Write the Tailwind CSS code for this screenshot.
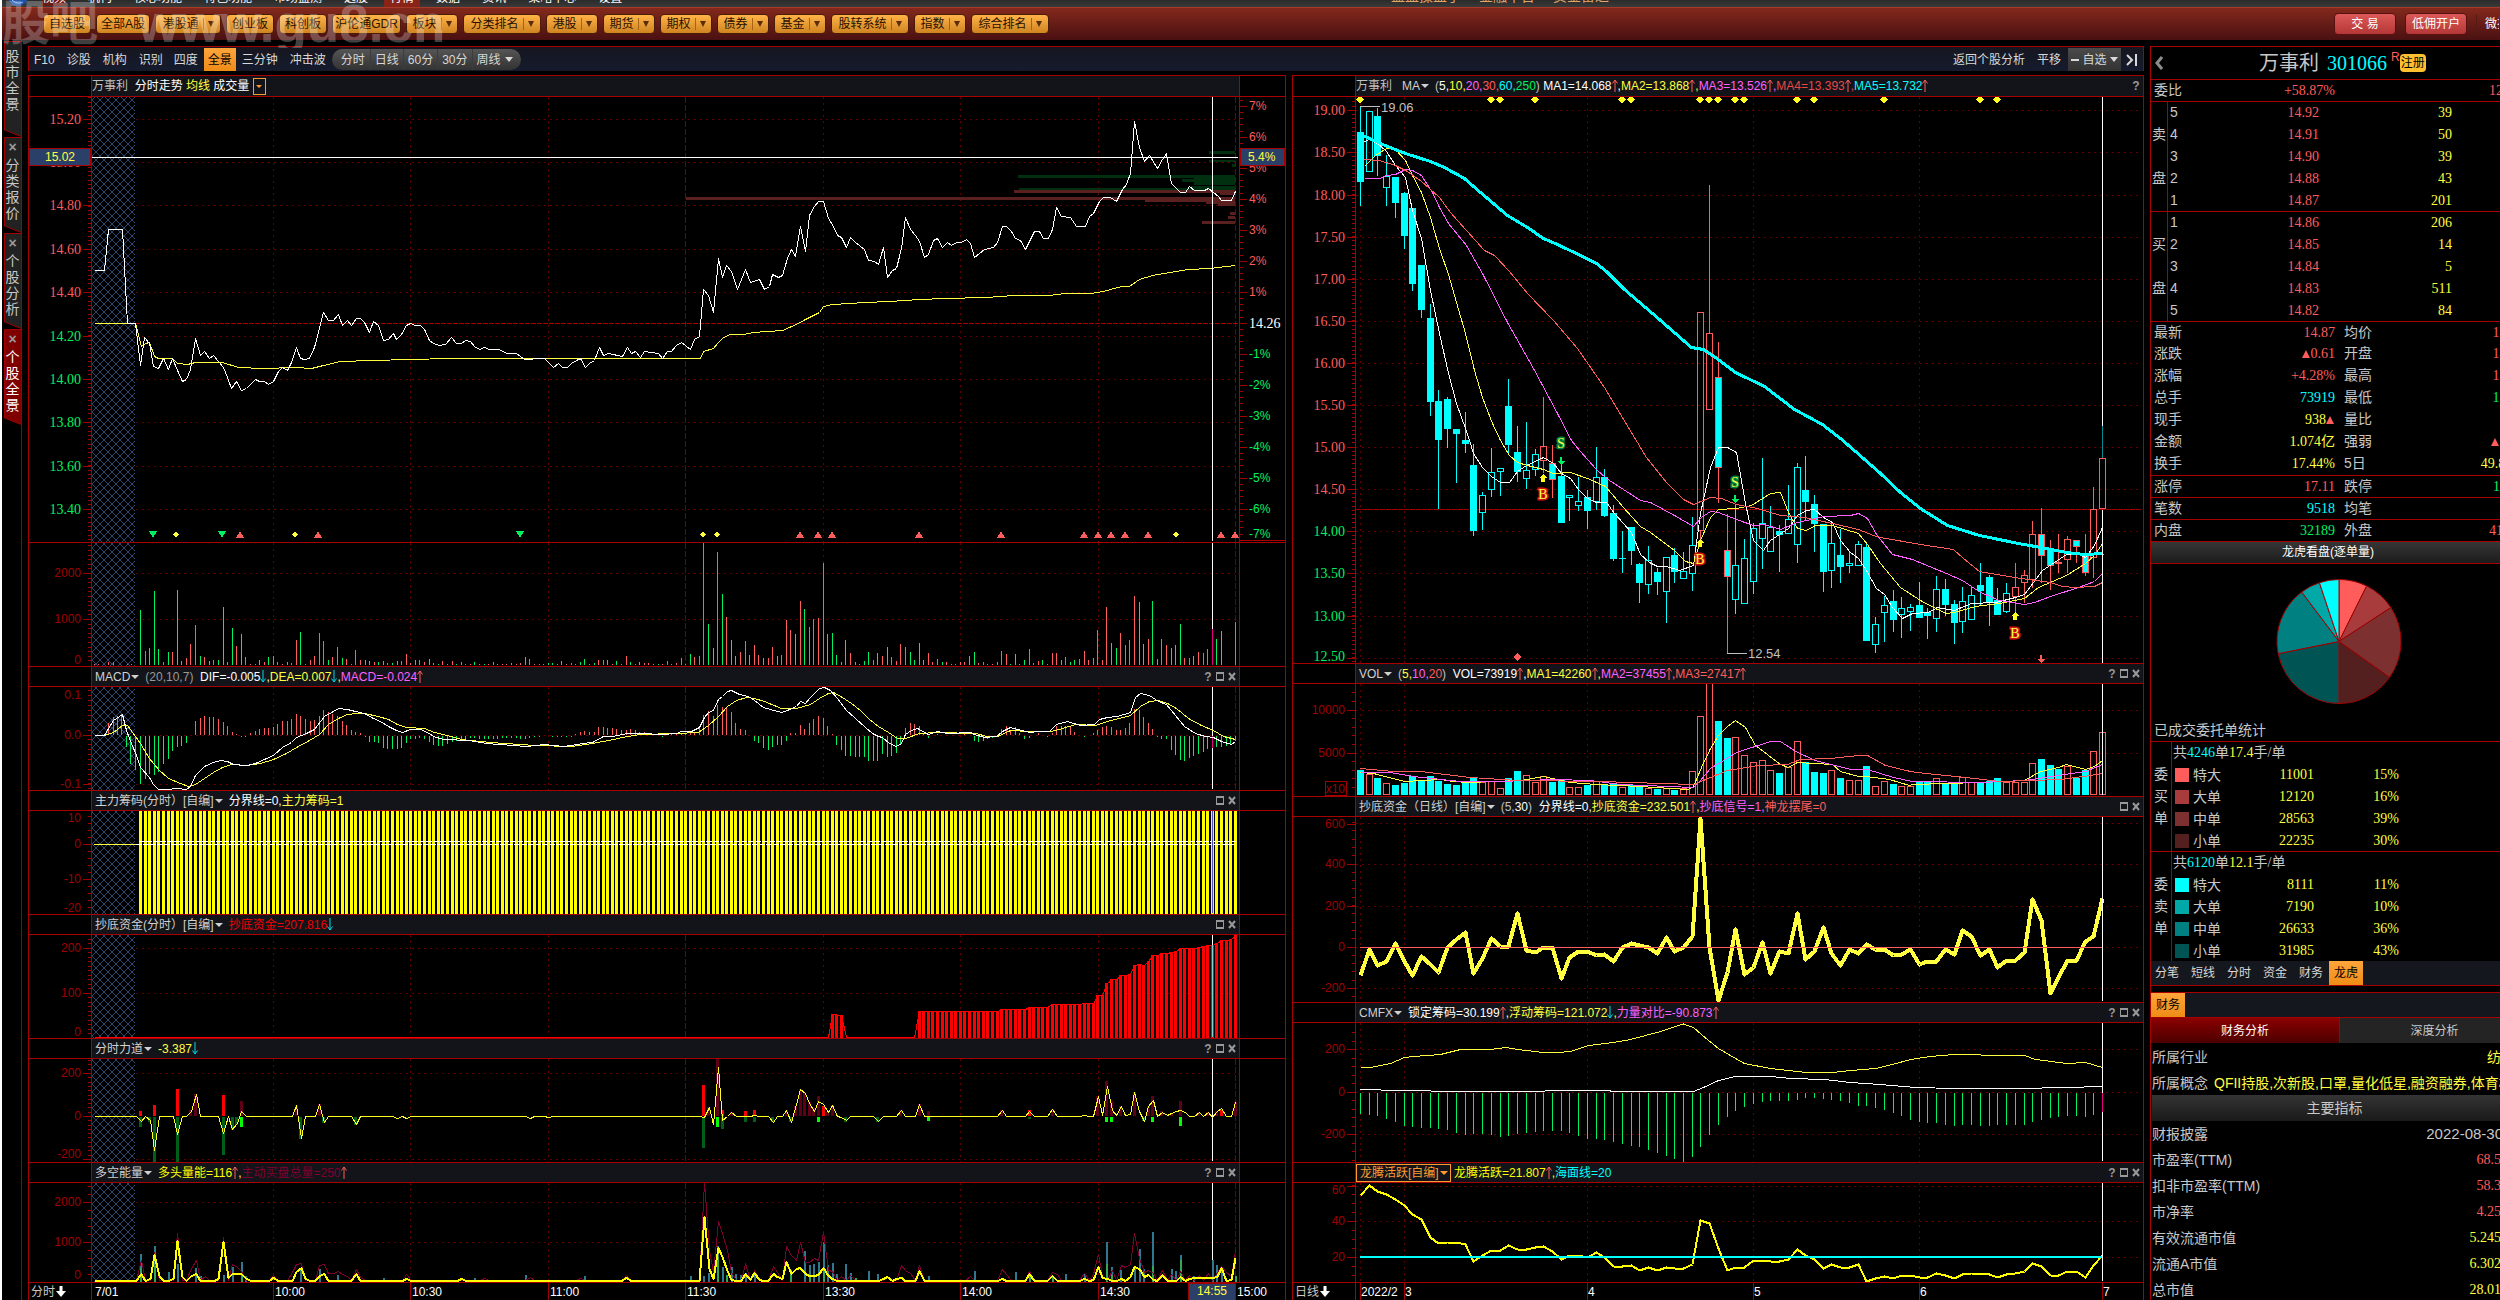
<!DOCTYPE html>
<html lang="zh-CN">
<head>
  <meta charset="UTF-8">
  <meta name="viewport" content="width=device-width, initial-scale=1.0">
  <title>万事利 301066 个股全景</title>
  <script src="https://cdn.jsdelivr.net/npm/@tailwindcss/browser@4"></script>
</head>
<body class="bg-black text-[#c8c8c8] text-xs font-['Liberation_Sans','Noto_Sans_CJK_SC',sans-serif] h-screen overflow-hidden">
<div class="relative h-screen flex flex-col overflow-hidden border-l-2 border-white">

  <!-- 菜单 -->
  <header class="h-[7px] shrink-0 overflow-hidden bg-gradient-to-b from-[#2b2b2b] to-[#3a3a3a] flex text-white">
    <nav class="w-[1389px] shrink-0 flex items-start gap-[22px] leading-4">
      <svg class="w-[18px] h-[6px] ml-[7px] -mr-[7px]" viewBox="0 0 18 6"><path d="M0 0H18C17 4 12 6 8 6C4 6 1 3 0 0Z" fill="#1d4fa8"/><path d="M3 0C6 3 10 4 14 2" stroke="#8fc0ff" fill="none"/></svg>
      <a href="#" class="-mt-[10px] bg-[#6b1a14]">视频</a>
      <a href="#" class="-mt-[10px]">机构</a>
      <a href="#" class="-mt-[10px]">核心功能</a>
      <a href="#" class="-mt-[10px]">特色功能</a>
      <a href="#" class="-mt-[10px]">市场监测</a>
      <a href="#" class="-mt-[10px]">选股</a>
      <a href="#" class="-mt-[10px] -mx-[6px] px-[6px] pb-1 bg-[#8a2318]">行情</a>
      <a href="#" class="-mt-[10px]">数据</a>
      <a href="#" class="-mt-[10px]">资讯</a>
      <a href="#" class="-mt-[10px]">策略中心</a>
      <a href="#" class="-mt-[10px]">设置</a>
    </nav>
    <div class="flex gap-[18px] -mt-[12px] text-sm leading-4 text-[#e0a868] whitespace-nowrap"><span>益盟操盘手</span><span>金融平台</span><span>资金雷达</span></div>
  </header>

  <!-- 板块按钮 -->
  <div class="h-[33px] shrink-0 flex items-center bg-gradient-to-b from-[#84291c] to-[#4a1011] border-t border-[#a83a28] pl-[41px]">
    <div id="markets" class="flex gap-[5px]"></div>
    <div class="ml-auto flex items-center gap-[9px] pr-[1px] text-white whitespace-nowrap">
      <button class="w-[62px] h-[22px] rounded-sm border border-[#5a1010] bg-gradient-to-b from-[#dc5a58] to-[#b43636]">交 易</button>
      <button class="w-[62px] h-[22px] rounded-sm border border-[#5a1010] bg-gradient-to-b from-[#dc5a58] to-[#b43636]">低佣开户</button>
      <a href="#" class="w-[23px] h-5 leading-5 pl-2 border-l border-[#5a1a14] overflow-hidden">微投</a>
    </div>
  </div>

  <main class="flex flex-1 min-h-0">
    <!-- 左侧标签 -->
    <aside class="w-[26px] shrink-0 pl-[2px]">
      <div id="side" class="w-[18px] h-full pt-[1px] border-r border-[#a00000]"></div>
    </aside>

    <section class="flex-1 min-w-0 pt-[6px]">
      <div class="flex items-center h-[25px] mb-1 pt-[1px] border-t border-x border-[#a80000] bg-gradient-to-b from-[#16161f] to-[#151b2e] text-[#d8d8d8] whitespace-nowrap">
        <button class="pl-[5px] pr-1.5">F10</button>
        <button class="px-1.5">诊股</button>
        <button class="px-1.5">机构</button>
        <button class="px-1.5">识别</button>
        <button class="pl-[5px] pr-1.5">四度</button>
        <button class="px-1 h-[23px] bg-gradient-to-b from-[#ffa53a] to-[#ee8c14] text-black">全景</button>
        <button class="px-1.5">三分钟</button>
        <button class="px-1.5">冲击波</button>
        <div class="flex items-center h-[21px] px-1 rounded-full bg-gradient-to-b from-[#555] to-[#333]">
          <button class="px-[5px] h-full border-r border-[#3c3c3c]">分时</button>
          <button class="px-1 h-full border-r border-[#3c3c3c]">日线</button>
          <button class="px-1 h-full border-r border-[#3c3c3c]">60分</button>
          <button class="px-1 h-full border-r border-[#3c3c3c]">30分</button>
          <button class="px-1 h-full flex items-center gap-1">周线<i class="border-x-4 border-t-[5px] border-x-transparent border-t-[#d8d8d8]"></i></button>
        </div>
        <div class="ml-auto flex items-center">
          <button class="pr-3">返回个股分析</button>
          <button class="pr-[7px]">平移</button>
          <button class="w-[53px] h-[23px] flex items-center justify-center gap-[3px] bg-gradient-to-b from-[#4a4a4a] to-[#333]"><i class="w-2 h-[2px] bg-[#d8d8d8]"></i>自选<i class="border-x-4 border-t-[5px] border-x-transparent border-t-[#d8d8d8]"></i></button>
          <button class="w-[22px] flex justify-center" aria-label="展开"><svg width="12" height="14" viewBox="0 0 12 14" fill="none" stroke="#d8d8d8" stroke-width="2"><path d="M1 2L6 7L1 12M10 1V13"/></svg></button>
        </div>
      </div>

      <div class="grid grid-cols-[1258fr_852fr] gap-[6px]">
        <div id="left" class="min-w-0 border-x border-[#a80000]"></div>
        <div id="right" class="min-w-0 border-x border-[#a80000]"></div>
      </div>
    </section>

    <!-- 报价 -->
    <aside class="w-[350px] shrink-0 ml-[6px] mt-[6px] overflow-hidden">
      <div class="w-[379px] border-l border-[#a80000] whitespace-nowrap">
        <h1 class="h-[33px] flex items-center border-t border-[#a80000] text-xl leading-8">
          <svg class="ml-1 mr-[96px]" width="8" height="14" viewBox="0 0 8 14" fill="none" stroke="#8c8c8c" stroke-width="3"><path d="M7 1L2 7L7 13"/></svg>
          万事利<span class="ml-2 text-[#00ffff] font-['Liberation_Serif']">301066</span><span class="ml-1 -mt-3 text-xs text-[#ff5c5c]">R</span><span class="px-[1px] text-xs leading-[18px] rounded-sm bg-[#ffc030] text-black">注册</span>
        </h1>
        <div id="quote" class="text-sm"></div>
        <h2 class="h-[22px] border-t border-[#a80000] bg-gradient-to-b from-[#363636] to-[#1c1c1c] text-white text-xs leading-5 pl-[131px]">龙虎看盘(逐单量)</h2>
        <svg id="pie" class="border-t border-[#a80000]" width="378" height="157" viewBox="2151 564 378 156"></svg>
        <div class="h-[21px] pl-[3px] text-sm leading-5">已成交委托单统计</div>
        <div id="orders" class="text-sm"></div>
        <div class="flex items-center h-[25px] border-b border-[#a80000] bg-[#15171f] text-[#d8d8d8]">
          <button class="pl-1 pr-1.5">分笔</button>
          <button class="px-1.5">短线</button>
          <button class="px-1.5">分时</button>
          <button class="px-1.5">资金</button>
          <button class="px-1.5">财务</button>
          <button class="px-[5px] h-6 bg-gradient-to-b from-[#ffa53a] to-[#ee8c14] text-black">龙虎</button>
        </div>
        <div class="mt-[6px] h-[25px] border-t border-[#a80000] bg-[#15171f]"><button class="px-[5px] h-6 bg-gradient-to-b from-[#ffa53a] to-[#ee8c14] text-black">财务</button></div>
        <div class="grid grid-cols-2 h-[26px] border-t border-[#a80000] text-center">
          <button class="bg-gradient-to-b from-[#8c0000] to-[#4c0000] border-r border-[#a80000] text-white">财务分析</button>
          <button class="bg-[#242424]">深度分析</button>
        </div>
        <div id="finance" class="pt-[1px] text-sm"></div>
      </div>
    </aside>
  </main>

  <div class="absolute left-0 top-0 h-12 flex items-end text-white/25 font-bold pointer-events-none overflow-hidden whitespace-nowrap" aria-hidden="true">
    <span class="text-5xl leading-12">股吧</span><span class="text-[53px] leading-12 pl-10">www.gu8.cn</span>
  </div>
</div>

<script>
  const RED = "#ff5c5c", GREEN = "#00f060", CYAN = "#00ffff", YEL = "#ffff40", MAG = "#ff60ff", DARK = "#a00000", GREY = "#c0c0c0", W = "#ffffff";
  const $ = id => document.getElementById(id);

  // ---------- 顶部按钮、侧边标签 ----------
  const markets = [["自选股", "w-12"], ["全部A股", "w-[54px]"], ["港股通", "w-[66px]", 1], ["创业板", "w-12"], ["科创板", "w-12"], ["沪伦通GDR", "w-[69px]"],
    ["板块", "w-[52px]", 1], ["分类排名", "w-[78px]", 1], ["港股", "w-[52px]", 1], ["期货", "w-[52px]", 1], ["期权", "w-[52px]", 1], ["债券", "w-[52px]", 1],
    ["基金", "w-[52px]", 1], ["股转系统", "w-[78px]", 1], ["指数", "w-[52px]", 1], ["综合排名", "w-[78px]", 1]];
  $("markets").innerHTML = markets.map(([t, w, drop]) =>
    `<button class="${w} h-5 flex items-center justify-center gap-1 rounded-sm border border-[#4a1c08] bg-gradient-to-b from-[#ffb347] to-[#cf8420] text-[#2a1000] whitespace-nowrap">${t}` +
    (drop ? `<i class="h-3 border-l border-[#a86410]"></i><i class="border-x-[3px] border-t-[6px] border-x-transparent border-t-[#5a2c08]"></i>` : "") + `</button>`).join("");

  $("side").innerHTML = ["股市全景", "分类报价", "个股分析", "个股全景"].map((t, i) =>
    `<button class="relative block w-[17px] h-24 text-sm leading-4 text-center ${i == 3 ? "text-white" : ""}">
      <svg class="absolute inset-0" width="17" height="96"><path d="M17.500 .5H.5V89L17.500 95.500" fill="${i == 3 ? "#800000" : "#222"}" stroke="#a00000"/></svg>
      <span class="relative block h-24 ${i ? "" : "pt-[7px]"}">${i ? '<b class="block h-5 leading-5 text-[#999]">×</b>' : ""}${[...t].map(c => `<span class="block">${c}</span>`).join("")}</span>
    </button>`).join("");

  // ---------- 面板行 ----------
  const tri = `<i class="ml-px mr-[6px] border-x-4 border-t-4 border-x-transparent border-t-current"></i>`;
  const arrow = (c, d) => `<svg class="inline-block align-middle -mt-[2px]" width="6" height="13" viewBox="0 0 6 13" fill="none" stroke="${c}"><path d="${d}"/></svg>`;
  const seg = list => list.map(([c, t]) => t === "v" ? `<span class="flex" style="color:${c}">${tri}</span>` : `<span class="whitespace-pre" style="color:${c}">${t.replace(/↑/g, arrow(RED, "M3 13V1M.5 4.500L3 1L5.500 4.500"))
    .replace(/↓/g, arrow("#00d8e8", "M3 0V12M.5 8.500L3 12L5.500 8.500"))}</span>`).join("");
  const icons = (n) => `<span class="ml-auto flex items-center gap-1 text-[#999] font-bold">
      ${n != 2 ? '<button class="w-2">?</button>' : ""}${n > 1 ? '<button class="w-2 h-[9px] border-2 border-x border-[#999]" aria-label="放大"></button><button class="w-2" aria-label="关闭"><svg width="8" height="9" viewBox="0 0 8 9" stroke="#999" stroke-width="2"><path d="M1 1L7 8M7 1L1 8"/></svg></button>' : ""}</span>`;
  function head(h, list, n, side, pad) {
    return `<div class="flex ${h} border-t border-[#a80000] leading-4">
      <div class="w-[63px] shrink-0 border-r border-[#a80000]"></div>
      <div class="flex-1 min-w-0 flex items-center ${pad ? "" : "pl-[3px]"} pr-[3px] bg-[#121419]">${seg(list)}${n ? icons(n) : ""}</div>
      ${side ? '<div class="w-[46px] shrink-0 border-l border-[#a80000]"></div>' : ""}</div>`;
  }
  function row(id, h, y, side) {
    const n = h - 1, w = side ? 1147 : 787, x = side ? 92 : 1356;
    return `<div class="flex border-t border-[#a80000]">
      <div class="w-[63px] shrink-0 border-r border-[#a80000]"><svg id="${id}-ax" class="block" width="62" height="${n}" viewBox="0 ${y + 1} 62 ${n}" shape-rendering="crispEdges"></svg></div>
      <div class="flex-1 min-w-0"><svg id="${id}" class="block w-full" height="${n}" viewBox="${x} ${y + 1} ${w} ${n}" preserveAspectRatio="none" shape-rendering="crispEdges" fill="none"></svg></div>
      ${side ? `<div class="w-[46px] shrink-0 border-l border-[#a80000]"><svg id="${id}-pc" class="block" width="45" height="${n}" viewBox="0 ${y + 1} 45 ${n}" shape-rendering="crispEdges"></svg></div>` : ""}</div>`;
  }
  const down = `<svg class="ml-px" width="10" height="11" viewBox="0 0 10 11" fill="#fff"><path d="M3.500 0H6.500V5H10L5 11L0 5H3.500Z"/></svg>`;
  const foot = (id, t, w) => `<div class="flex h-[18px] border-t border-[#a80000]"><div class="w-[63px] shrink-0 border-r border-[#a80000] flex items-center pl-[2px]">${t}${down}</div><svg id="${id}" class="block flex-1" height="17" viewBox="${w} 17" preserveAspectRatio="none" shape-rendering="crispEdges"></svg></div>`;

  $("left").innerHTML =
    head("h-[21px]", [[GREY, "万事利  "], [W, "分时走势 "], [YEL, "均线 "], [W, "成交量 "], ["#ff9a30", "BOX"]], 0, 1, 1).replace(/<span class="whitespace-pre" style="color:#ff9a30">BOX<\/span>/, `<button class="w-[13px] h-[17px] flex items-center justify-center border border-[#ff9a30]" aria-label="指标"><i class="border-x-[3px] border-t-[3px] border-x-transparent border-t-[#ff9a30]"></i></button>`) +
    row("price", 446, 96, 1) + row("vol", 124, 542, 1) +
    head("h-5", [["#d0d0d0", "MACD"], ["#d0d0d0", "v"], ["#999", "(20,10,7)  "], [W, "DIF=-0.005↓,"], [YEL, "DEA=0.007↓,"], [MAG, "MACD=-0.024↑"]], 3, 1) + row("macd", 104, 686, 1) +
    head("h-5", [["#d0d0d0", "主力筹码(分时）[自编]"], ["#d0d0d0", "v"], [W, "分界线=0,"], [YEL, "主力筹码=1"]], 2, 1) + row("chip", 104, 810, 1) +
    head("h-5", [["#d0d0d0", "抄底资金(分时）[自编]"], ["#d0d0d0", "v"], ["#f00000", "抄底资金=207.816↓"]], 2, 1) + row("fund", 104, 934, 1) +
    head("h-5", [["#d0d0d0", "分时力道"], ["#d0d0d0", "v"], [YEL, "-3.387↓"]], 3, 1) + row("force", 104, 1058, 1) +
    head("h-5", [["#d0d0d0", "多空能量"], ["#d0d0d0", "v"], ["#ffff00", "多头量能=116↑,"], ["#800030", "主动买盘总量=250↑"]], 3, 1) + row("energy", 100, 1182, 1) +
    foot("time", "分时", "92 1283 1193");

  $("right").innerHTML =
    head("h-[21px]", [[GREY, "万事利   "], ["#d0d0d0", "MA"], ["#d0d0d0", "v"], [GREY, "("], [W, "5,"], [YEL, "10,"], [MAG, "20,"], [RED, "30,"], [CYAN, "60,"], [GREEN, "250"], [GREY, ") "], [W, "MA1=14.068↑,"], [YEL, "MA2=13.868↑,"], [MAG, "MA3=13.526↑,"], ["#e84848", "MA4=13.393↑,"], [CYAN, "MA5=13.732↑"]], 1, 0, 1) + row("kline", 567, 96) +
    head("h-5", [["#d0d0d0", "VOL"], ["#d0d0d0", "v"], [GREY, "("], [YEL, "5,"], [MAG, "10,"], [RED, "20"], [GREY, ")  "], [W, "VOL=73919↑,"], [YEL, "MA1=42260↑,"], [MAG, "MA2=37455↑,"], [RED, "MA3=27417↑"]], 3) + row("kvol", 113, 683) +
    head("h-5", [["#d0d0d0", "抄底资金（日线）[自编]"], ["#d0d0d0", "v"], [GREY, "(5,"], [W, "30"], [GREY, ")  "], [W, "分界线=0,"], [YEL, "抄底资金=232.501↑,"], [MAG, "抄底信号=1,"], [RED, "神龙摆尾=0"]], 2) + row("kfund", 186, 816) +
    head("h-5", [["#d0d0d0", "CMFX"], ["#d0d0d0", "v"], [W, "锁定筹码=30.199↑,"], [YEL, "浮动筹码=121.072↓,"], [MAG, "力量对比=-90.873↑"]], 3) + row("cmfx", 140, 1022) +
    head("h-5", [["#ff9a30", "SEL"], ["#ffff00", " 龙腾活跃=21.807↑,"], [CYAN, "海面线=20"]], 3, 0, 1).replace(/<span class="whitespace-pre" style="color:#ff9a30">SEL<\/span>/, `<button class="h-[18px] flex items-center pl-[3px] pr-[2px] border border-[#ff9a30] text-[#ff9a30]">龙腾活跃[自编]<i class="ml-px border-x-4 border-t-4 border-x-transparent border-t-current"></i></button>`) + row("dragon", 100, 1182) +
    foot("dates", "日线", "1356 1283 787");

  // ---------- 绘图 ----------
  const add = (id, s) => $(id).insertAdjacentHTML("beforeend", s);
  const mx = m => 136 + 4.58 * m;          // 分钟 -> x
  const kx = i => Math.floor(1360.4 + 8.732 * i);      // K线 -> x
  const poly = (pts, c, w = 1) => `<polyline points="${pts}" stroke="${c}" stroke-width="${w}" transform="translate(.5 .5)" stroke-linejoin="round"/>`;
  const hl = (y, x1, x2, c, d = "") => `<path d="M${x1} ${Math.floor(y) + .5}H${x2}" stroke="${c}" stroke-dasharray="${d}"/>`;
  const vl = (x, y1, y2, c, d = "") => `<path d="M${Math.floor(x) + .5} ${y1}V${y2}" stroke="${c}" stroke-dasharray="${d}"/>`;
  const box = (x, y, w, h, c) => `<rect x="${x}" y="${y}" width="${w}" height="${h}" fill="${c}"/>`;
  const txt = (x, y, t, c, size = 12, anchor = "start", serif = 0) =>
    `<text x="${x}" y="${y}" fill="${c}" font-size="${size}" text-anchor="${anchor}" font-family="${serif ? "Liberation Serif" : "Liberation Sans"}">${t}</text>`;
  const GRID = "#620000";

  function axis(id, y1, y2, step, from, labels, serif) {
    let s = "";
    for (let y = from; y < y2; y += step) if (y > y1) s += hl(y, 59, 62, DARK);
    for (let y = from; y > y1; y -= step) s += hl(y, 59, 62, DARK);
    labels.forEach(([t, y, c, g]) => { if (g !== 0) s += hl(g || y, 54, 62, DARK); s += txt(52, y + (serif ? 5 : 4), t, c || DARK, serif ? 14 : 12, "end", serif); });
    add(id + "-ax", s);
  }

  const minuteX = [273, 410, 548, 823, 960, 1098];
  function leftGrid(id, y1, y2, ys) {
    add(id, `<defs><pattern id="h-${id}" width="8" height="8" patternUnits="userSpaceOnUse"><path d="M0 0L8 8M8 0L0 8" stroke="#2c4670"/></pattern></defs>` +
      `<rect x="92" y="${y1}" width="43" height="${y2 - y1}" fill="url(#h-${id})"/>` +
      ys.map(y => hl(y, 136, 1235, GRID, "2 4")).join("") + minuteX.map(x => vl(x, y1, y2, GRID, "2 4")).join("") +
      vl(685, y1, y2, "#780000", "6 2") + vl(1235, y1, y2, "#780000", "6 2"));
  }
  const cross = (id, y1, y2) => add(id, vl(1212, y1, y2, W));

  // 分时走势
  leftGrid("price", 97, 542, [119, 162, 205, 249, 292, 336, 379, 422, 466, 509]);
  add("price", hl(323, 135, 1239, "#b00000", "5 1"));
  add("price", [[1209, 151, 3], [1209, 160, 2], [1232, 164, 3], [1018, 175, 3], [1194, 178, 7], [1182, 179, 3], [1191, 186, 3], [1019, 188, 2]].map(([x, y, h]) => box(x, y, 1235 - x, h, "#003010")).join("") +
    [[1014, 190, 3], [1220, 193, 2], [686, 197, 3], [1145, 200, 2], [1206, 202, 2], [1218, 204, 2], [1230, 212, 3], [1228, 216, 3], [1202, 221, 3]].map(([x, y, h]) => box(x, y, 1235 - x, h, "#5a2020")).join(""));
  add("price", poly("94,323 135,323 141,346 145,343 149,342 154,356 158,358 172,358 177,363 187,364 195,362 222,362 238,367 262,368 296,367 311,368 323,365 340,361 371,360 410,359 449,358 700,358 703,351 713,348 718,342 723,337 730,334 743,334 753,332 767,331 782,330 798,323 805,319 819,312 823,306 832,304 865,302 889,301 919,299 944,298 986,297 1014,295 1049,295 1064,293 1090,293 1103,291 1110,289 1121,286 1129,286 1139,279 1152,275 1169,272 1188,269 1209,268 1235,265", YEL));
  add("price", poly("94,270 104,270 108,229 122,229 127,323 135,323 140,365 144,337 149,343 153,366 158,368 163,358 168,369 172,358 177,370 182,381 186,379 190,369 195,338 200,355 204,351 209,358 213,355 218,361 223,367 227,377 231,388 236,381 241,390 246,388 255,379 259,381 264,381 268,384 273,381 278,371 282,367 287,370 291,362 296,347 300,358 304,359 309,358 314,347 319,328 323,312 328,320 333,320 338,314 342,325 347,320 351,325 356,318 360,318 364,322 369,332 373,321 378,325 383,340 388,339 393,333 396,339 401,334 406,325 410,323 415,325 420,325 424,329 429,340 433,343 439,345 445,344 451,337 456,343 461,343 465,340 470,341 474,346 479,349 484,347 489,349 498,349 507,353 516,353 524,359 530,359 535,358 544,358 549,363 553,367 558,363 562,367 567,367 571,363 576,360 580,358 585,367 589,363 594,360 599,347 603,355 608,353 622,356 627,347 631,353 635,351 640,357 644,351 658,353 662,358 667,351 671,351 676,345 681,342 690,349 694,339 699,336 703,289 708,295 713,312 718,258 722,277 726,265 731,271 737,289 745,269 750,282 759,279 764,289 769,286 772,274 778,277 782,275 787,258 791,249 795,256 800,226 805,251 809,215 814,206 818,201 823,201 828,218 833,226 837,235 841,237 846,247 850,237 855,242 864,249 868,260 874,261 878,264 883,247 887,277 892,270 896,268 901,248 905,217 910,229 915,235 919,241 924,257 928,254 933,240 937,238 942,247 947,242 951,245 956,242 961,242 966,239 970,243 974,257 984,249 993,247 997,242 1002,226 1006,226 1011,231 1015,238 1020,240 1025,249 1034,231 1039,231 1043,238 1048,238 1052,229 1056,207 1061,216 1070,217 1076,226 1085,226 1089,216 1093,213 1099,201 1103,197 1110,197 1116,201 1122,189 1126,184 1130,173 1134,121 1139,147 1144,161 1149,155 1157,168 1162,159 1166,153 1171,183 1175,187 1180,192 1185,192 1189,186 1194,190 1204,190 1208,188 1213,192 1218,196 1221,200 1231,200 1235,191", W));
  add("price", hl(157, 92, 1238, W));
  const dia = (x, y, c, r = 4) => `<path d="M${x} ${y - r}L${x + r} ${y}L${x} ${y + r}L${x - r} ${y}Z" fill="${c}"/>`;
  const up = (x, y, c) => `<path d="M${x} ${y - 4}L${x + 4} ${y + 3}H${x - 4}Z" fill="${c}"/>`;
  const dn = (x, y, c) => `<path d="M${x} ${y + 4}L${x + 4} ${y - 3}H${x - 4}Z" fill="${c}"/>`;
  add("price", [153, 222, 520].map(x => dn(x, 534, GREEN)).join("") + [176, 295, 703, 717, 1176].map(x => dia(x, 534.5, YEL, 3)).join("") +
    [240, 318, 800, 818, 832, 919, 1001, 1084, 1098, 1111, 1125, 1148, 1221, 1235].map(x => up(x, 535, RED)).join(""));
  cross("price", 97, 541);
  axis("price", 97, 540, 4.33, 119.4, [["15.20", 119, RED], ["15.00", 162, RED], ["14.80", 205, RED], ["14.60", 249, RED], ["14.40", 292, RED], ["14.20", 336, GREEN], ["14.00", 379, GREEN], ["13.80", 422, GREEN], ["13.60", 466, GREEN], ["13.40", 509, GREEN]], 1);
  add("price-ax", `<rect x=".5" y="148.500" width="61" height="17" fill="#2a4068" stroke="#a80000"/>` + txt(46, 161, "15.02", YEL, 12, "end"));
  let pc = "";
  for (let y = 106.3 - 6.2; y < 540; y += 6.2) pc += hl(y, 0, 3, DARK);
  for (let p = 7; p >= -7; p--) {
    const y = 323.3 - p * 31;
    pc += hl(y, 0, 7, DARK) + (p ? txt(9, Math.min(Math.round(y) + 4, 538), p + "%", p > 0 ? RED : GREEN) : txt(9, 328, "14.26", W, 14, "start", 1));
  }
  add("price-pc", pc + hl(540, 0, 45, "#a80000") + `<rect x=".5" y="148.500" width="44" height="17" fill="#2a4068" stroke="#a80000"/>` + txt(8, 161, "5.4%", YEL));

  // 成交量，正为红负为绿
  const vol = [-55,14,-17,-74,-16,3,-13,13,-75,-4,7,21,40,-9,8,-4,5,-5,-58,-3,-37,19,-31,8,1,1,-5,3,-8,9,
    3,1,-3,2,25,-33,1,5,9,32,24,-5,8,18,-7,6,1,15,5,-5,-4,3,-3,-4,2,-2,-4,4,11,2,
    -5,5,3,-6,2,-1,4,1,4,-1,3,1,1,-3,1,-1,1,3,-1,1,1,-2,1,2,-8,6,1,1,1,-2,
    -2,1,-4,1,2,1,-3,-6,1,-2,5,5,-5,1,-4,1,9,-3,1,-3,2,2,-1,-1,1,4,1,2,7,-1,
    -11,8,9,122,-41,-17,113,-71,48,-25,-9,13,24,-10,20,10,-7,7,18,-9,10,45,35,-31,64,-56,38,46,47,102,
    -31,-32,-10,-3,-25,12,-3,-1,-4,-13,5,-12,9,-18,8,4,21,18,-13,-5,-22,-5,12,3,6,-3,3,-1,1,3,
    3,-9,-13,2,3,1,1,3,14,11,-1,-11,-1,-5,16,2,4,-5,1,12,12,-5,8,-3,-5,6,14,5,7,35,
    5,58,-22,-17,32,20,25,69,-63,-21,26,-64,-6,26,20,-17,-20,-41,7,7,-9,13,12,16,36,-26,-34,0,0,43];
  leftGrid("vol", 543, 666, [573, 619]);
  cross("vol", 543, 630);
  add("vol", vol.map((v, i) => v ? vl(mx(i + 1), 665 - Math.abs(v), 665, i == 234 ? "#e00080" : v > 0 ? RED : GREEN) : "").join("") + [94, 98, 108, 113, 127, 131].map((x, i) => vl(x, i == 2 || i == 3 ? 662 : 664, 665, RED)).join(""));
  axis("vol", 544, 665, 4.6, 573.5, [["2000", 573], ["1000", 619], ["0", 660, DARK, 0]]);

  // MACD
  const hist = [-48,-43,-38,-39,-36,-28,-23,-15,-11,-10,-7,0,14,17,19,18,18,16,13,9,3,1,-1,-1,2,4,6,7,7,8,
    11,14,14,16,21,19,16,14,15,19,25,23,21,19,14,10,5,3,2,-1,-6,-6,-7,-12,-13,-13,-13,-12,-7,-3,
    -3,-2,-3,-6,-9,-10,-10,-8,-6,-5,-4,-3,-2,-2,-3,-3,-3,-3,-3,-2,-2,-2,-2,-3,-3,-2,-1,-1,0,0,
    -1,-1,-1,-1,-1,1,3,4,3,3,8,8,7,7,6,5,5,6,5,3,3,2,1,1,-1,1,1,1,2,2,
    2,3,9,20,24,19,30,28,28,23,12,6,5,0,-5,-7,-12,-14,-11,-9,-9,-5,2,2,10,6,12,16,19,17,
    9,1,-9,-14,-20,-20,-21,-21,-21,-25,-25,-25,-18,-21,-20,-17,-9,7,12,11,9,2,-2,0,1,0,0,0,0,0,
    1,0,-5,-6,-5,-3,-2,0,6,9,5,8,2,-3,-2,0,2,0,-1,2,9,9,9,8,3,0,-1,0,2,5,
    8,9,8,5,5,7,12,26,25,18,12,6,-1,-3,-3,-14,-19,-24,-25,-22,-20,-18,-16,-13,-12,-11,-11,-10,-9,-5];
  leftGrid("macd", 687, 790, [735, 784]);
  cross("macd", 687, 789);
  const stick = (x, v, y, c) => v > 0 ? vl(x, y - v, y, c || RED) : vl(x, y + 1, y + 1 - v, c || GREEN);
  add("macd", [[108, 12], [113, 18], [117, 19], [121, 21], [126, -11], [130, -28], [135, -34]].map(([x, v]) => stick(x, v, 735)).join("") +
    hist.map((v, i) => v ? stick(mx(i + 1), v, 735, i == 234 ? "#e00080" : "") : "").join(""));
  add("macd", poly("94,735 104,735 113,732 122,725 127,725 135,736 140,743 149,758 158,769 168,778 180,783 188,786 195,784 204,778 213,772 222,767 231,764 246,765 260,763 273,759 286,753 296,747 309,740 319,734 328,724 338,718 347,714 356,713 364,713 378,716 388,719 397,724 406,727 424,728 434,732 447,735 461,739 490,742 535,745 571,746 592,743 608,740 627,736 640,734 676,733 698,732 708,725 718,716 727,706 736,700 746,697 754,698 764,701 781,708 796,708 810,704 819,698 828,693 833,692 842,697 851,703 860,710 869,719 878,726 888,732 897,738 905,738 919,733 937,732 976,733 986,736 997,736 1010,730 1028,731 1036,731 1051,731 1062,728 1075,724 1095,725 1107,721 1130,715 1140,706 1149,701 1158,700 1167,703 1176,708 1188,718 1201,725 1213,730 1223,736 1235,739", YEL) +
    poly("94,735 104,735 113,720 122,714 126,730 131,743 136,755 140,767 149,777 153,784 158,789 168,789 176,788 186,789 190,786 195,775 204,766 213,762 220,760 227,761 233,764 246,765 255,763 264,759 273,755 282,747 291,742 296,737 306,733 314,729 324,716 333,711 338,708 347,709 355,711 364,713 373,718 380,721 388,726 396,730 402,732 410,729 420,729 429,733 433,736 443,739 469,740 486,743 526,746 544,744 563,746 571,745 582,743 592,742 603,736 612,736 627,733 640,733 662,734 676,733 681,731 691,731 699,727 704,717 708,712 713,710 718,699 722,696 727,691 731,690 739,694 748,696 754,700 763,707 770,709 781,712 787,710 796,706 800,701 805,703 810,697 819,688 824,687 830,690 837,698 846,710 855,718 865,727 872,733 878,736 882,737 889,743 896,746 901,743 905,734 911,730 917,728 924,732 928,734 937,731 947,733 970,732 974,734 984,737 996,736 1002,731 1010,727 1021,730 1030,732 1038,731 1049,731 1056,724 1067,721 1080,725 1094,724 1099,719 1107,717 1117,716 1130,712 1135,697 1140,693 1149,695 1158,701 1166,704 1175,715 1184,726 1195,733 1205,736 1213,737 1221,741 1231,744 1235,741", W));
  axis("macd", 690, 789, 4.9, 735, [["0.1", 695, DARK, 0], ["0.0", 735], ["-0.1", 784]]);

  // 主力筹码
  leftGrid("chip", 811, 914, []);
  let bars = "";
  for (let m = 1; m <= 240; m++) bars += box(Math.floor(mx(m)) - 1, 811, 3, 103, "#ffff00");
  add("chip", bars + hl(844, 94, 136, YEL) + hl(841, 139, 1235, W, "6 1") + hl(844, 136, 1235, W, "6 1") + vl(1212, 811, 913, "#5050c0"));
  axis("chip", 814, 913, 7, 844, [["10", 818, DARK, 0], ["0", 844], ["-10", 879], ["-20", 908, DARK, 0]]);

  // 抄底资金
  const fund = [[152, 1014], [153, 1015], [154, 1015]];
  for (let m = 171; m <= 209; m++) fund.push([m, m < 189 ? 1011 : m < 195 ? 1009 : m < 200 ? 1007 : m < 207 ? 1004 : 1003]);
  [995, 995, 983, 979, 979, 975, 975, 974, 965, 964, 965, 961, 955, 955, 953, 953, 952, 951, 948, 948, 948, 948, 947, 946, 945, 945, 943, 940, 940, 939, 935].forEach((y, i) => fund.push([210 + i, y]));
  leftGrid("fund", 935, 1038, [948, 993]);
  add("fund", fund.map(([m, y]) => box(Math.floor(mx(m)) - 1, y, 3, 1038 - y, "#f00")).join("") +
    poly("94,1037 828,1037 832,1014 841,1015 846,1037 914,1037 " + fund.slice(3).map(([m, y]) => mx(m).toFixed(0) + "," + y).join(" "), "#f00") + vl(1212, 935, 945, W) + vl(1212, 945, 1037, "#80d0d0"));
  axis("fund", 936, 1037, 4.5, 948, [["200", 948], ["100", 993], ["0", 1032, DARK, 0]]);

  // 分时力道
  const R = "#ff0000", D = "#600018", G = "#006018", L = "#00ff00";
  const sparse = (o, y0) => { let s = "94," + y0 + " "; for (let m = 0; m <= 240; m++) s += mx(m).toFixed(0) + "," + (y0 - (o[m] || 0)) + " "; return s; };
  leftGrid("force", 1059, 1162, [1073, 1159]);
  cross("force", 1059, 1161);
  add("force", [[1,5,R],[1,-10,G],[3,-5,G],[4,11,R],[4,-45,G],[9,27,R],[9,-45,G],[12,6,D],[13,22,D],[19,21,R],[19,-38,G],[21,-13,G],[22,-8,G],[23,15,D],[23,-10,L],[35,11,D],[36,-22,G],[40,12,D],[41,-6,G],[48,-8,G],
    [124,31,R],[124,-31,G],[125,9,D],[127,57,D],[127,-10,L],[128,6,R],[128,-12,G],[130,4,D],[133,5,R],[133,-5,G],[135,6,R],[135,-5,G],[139,-5,G],[142,6,D],[143,-5,G],[144,10,D],[145,27,D],[146,23,D],[147,14,D],[148,8,D],[149,20,D],[149,-5,L],[150,10,R],[151,4,D],[152,11,D],[155,-5,G],[162,-5,G],[167,6,D],[171,12,D],[173,5,D],[173,-4,L],[189,6,D],[195,6,R],[195,-2,G],[200,7,D],[210,20,D],[212,35,D],[212,-5,L],[213,15,D],[213,-5,L],[215,10,D],[218,24,D],[220,-4,G],[221,10,D],[222,20,D],[222,-5,L],[224,5,D],[226,3,D],[228,15,D],[228,-9,L],[232,4,D],[234,4,D],[236,5,D],[237,6,R],[240,14,D]]
    .map(([m, v, c]) => box(Math.floor(mx(m)) - 1, v > 0 ? 1116 - v : 1117, 3, Math.abs(v), c)).join("") +
    poly(sparse({1:-5,3:-4,4:-34,9:-18,12:5,13:22,19:-17,21:-13,22:-7,23:5,35:11,36:-22,40:12,41:-6,48:-8,57:-2,59:-2,86:-2,90:-1,124:-1,125:9,126:-8,127:49,128:-4,130:4,135:1,139:-6,142:6,143:-6,144:12,145:27,146:23,147:13,148:5,149:15,150:12,151:4,152:11,154:-1,155:-4,162:-5,167:6,171:12,189:6,195:5,200:7,207:1,210:20,211:1,212:30,213:6,214:1,215:10,216:1,217:2,218:24,219:5,220:-5,221:10,222:16,224:4,225:1,226:3,227:5,228:6,229:4,232:4,234:4,235:-1,236:5,237:8,240:14}, 1116), "#ffff20"));
  axis("force", 1060, 1161, 4.3, 1116.5, [["200", 1073], ["0", 1116], ["-200", 1154, DARK, 1159]]);

  // 多空能量
  leftGrid("energy", 1183, 1282, [1202, 1242]);
  cross("energy", 1183, 1281);
  const cols = (o, c) => Object.entries(o).map(([m, v]) => box(Math.floor(mx(+m)), 1282 - v, 2, v, c)).join("");
  add("energy", cols({1:28,4:36,7:10,9:18,13:14,14:6,19:7,21:15,23:20,24:6,36:12,40:13,44:7,54:4,74:4,85:7,98:6,121:6,124:6,125:9,127:36,128:15,130:15,131:8,132:7,133:9,135:9,146:31,147:17,148:18,149:20,150:40,151:17,152:19,153:8,155:18,156:9,160:11,162:8,173:6,183:11,192:10,203:8,207:8,212:40,213:15,215:12,218:14,219:33,220:13,222:50,226:13,227:11,228:27,231:6,235:22,236:17,237:15}, "#307890") +
    cols({1:14,4:16,23:10,127:25,129:7,143:12,147:6,150:14,157:4,195:8,200:5,212:18,213:7,222:16,228:22,240:6}, "#30a858") +
    poly(sparse({1:20,4:28,9:47,12:12,13:20,15:4,19:43,21:16,22:13,23:9,30:5,34:8,35:16,36:17,40:15,41:16,42:7,43:7,44:9,45:6,46:4,48:11,49:3,59:6,76:2,86:3,97:2,107:5,124:98,125:30,126:8,127:59,128:47,129:30,130:8,133:17,135:10,139:14,140:8,142:34,143:25,144:20,145:38,146:18,147:18,148:22,149:20,150:48,151:10,152:9,154:4,156:5,164:3,167:15,168:10,169:7,171:15,182:4,189:11,190:6,195:9,200:8,201:6,207:7,209:6,210:26,211:4,213:10,215:15,216:13,217:16,218:47,219:22,220:8,221:10,222:7,224:10,226:6,228:9,230:5,232:5,234:7,236:8,237:14,238:8,239:4,240:30}, 1280), "#7c0030") +
    poly(sparse({1:7,3:2,4:26,5:5,8:2,9:40,10:4,12:5,13:7,18:2,19:39,20:3,21:7,22:7,23:7,24:2,30:3,35:9,36:13,37:2,40:5,41:7,48:7,59:2,71:2,107:3,124:64,125:12,126:2,127:33,128:24,129:10,130:1,133:7,134:1,135:8,136:1,139:7,140:4,141:2,142:19,143:7,144:12,145:13,146:7,147:5,148:5,149:6,150:13,151:5,152:2,163:2,164:4,166:2,167:3,171:10,189:2,195:7,200:5,207:2,209:1,210:14,211:3,212:2,215:2,217:4,218:14,219:12,220:4,221:6,222:1,224:6,228:4,230:2,231:3,232:3,233:3,234:3,235:3,236:4,237:13,239:1,240:23}, 1280.5), "#ffff00", 2));
  axis("energy", 1185, 1281, 8, 1202, [["2000", 1202], ["1000", 1242], ["0", 1275, DARK, 0]]);

  add("time", [["10:00", 273], ["10:30", 410], ["11:00", 548], ["11:30", 685], ["13:30", 823], ["14:00", 960], ["14:30", 1098]].map(([t, x]) => vl(x, 1283, 1300, DARK) + txt(x + 2, 1296, t, W)).join("") +
    txt(95, 1296, "7/01", W) + `<rect x="1188.500" y="1283.500" width="47" height="17" fill="#2a4068" stroke="#a00000"/>` + txt(1197, 1295, "14:55", YEL) + txt(1237, 1296, "15:00", W));

  // ---------- 日线 ----------
  function rightGrid(id, y1, y2, ys) {
    add(id, ys.map(y => hl(y, 1356, 2142, GRID, "2 4")).join("") + [1360, 1404, 1587, 1753, 1919].map(x => vl(x, y1, y2, GRID, "2 4")).join(""));
  }
  const kys = Array.from({ length: 14 }, (_, i) => Math.round(110.3 + 42.1 * i));
  rightGrid("kline", 97, 663, kys);
  add("kline", hl(509, 1356, 2142, "#a00000", "5 1"));
  // 类型 最高 上沿 下沿 最低；c实心 h空心 r红空心 m红框实心
  const candles = "c107,132,182,206 h111,111,172,172 c108,116,156,176 h155,176,188,206 c177,177,203,218 c192,193,236,249 c208,208,284,291 c265,265,310,318 c304,318,402,416 c390,401,440,509 c397,399,429,448 c429,429,434,483 c412,440,444,453 c444,465,531,536 h492,495,513,530 h448,472,490,497 h468,468,472,496 c379,406,445,455 c426,452,472,482 h422,470,479,489 h449,454,470,476 r397,446,461,473 m445,463,480,498 c465,476,523,523 h495,495,498,521 h477,501,506,511 c490,497,511,529 h447,477,502,510 c469,477,516,517 c505,513,559,561 c531,558,559,573 c527,527,551,565 c563,564,583,603 h546,560,585,594 c568,572,582,595 h557,557,592,623 c548,555,572,583 h552,571,579,579 h517,545,574,591 r312,312,531,545 r185,333,410,410 m342,377,468,503 m514,550,577,653 h504,565,600,614 h539,558,604,604 h523,528,582,594 h458,523,539,569 h506,527,552,552 c525,531,535,572 h485,519,534,534 h463,467,545,563 c456,490,502,520 c495,504,524,552 c524,524,572,592 h523,543,571,588 c529,555,567,583 h552,563,566,573 h541,544,566,566 c544,547,641,641 h617,624,645,653 h596,605,613,642 c590,601,620,632 h597,608,615,638 h604,607,612,631 c582,605,618,618 c608,612,616,639 h576,589,619,632 c579,589,605,616 c600,604,623,644 h587,601,622,633 h586,595,620,620 c563,585,591,605 c575,577,602,626 c588,600,615,615 h583,593,612,613 r563,587,597,612 r570,575,583,603 r521,534,580,588 m508,534,556,583 m540,548,566,590 r534,562,563,573 r536,539,560,573 m540,540,547,563 m534,553,573,576 r487,509,558,578 r458,458,509,509".split(" ");
  add("kline", candles.map((s, i) => {
    const t = s[0], [hi, a, b, lo] = s.slice(1).split(",").map(Number), x = kx(i), c = t == "r" || t == "m" ? RED : CYAN;
    return vl(x, hi, a, c) + vl(x, b, lo, c) + (t == "c" ? box(x - 3, a, 7, b - a, c) :
      `<rect x="${x - 2.5}" y="${a + .5}" width="6" height="${Math.max(b - a - 1, 1)}" stroke="${c}" ${t == "m" ? 'fill="#00ffff"' : ""}/>`);
  }).join(""));
  add("kline", poly("1364,141 1369,139 1377,143 1386,151 1395,165 1405,177 1412,210 1421,238 1426,267 1430,290 1439,333 1448,373 1456,403 1465,428 1470,443 1473,453 1482,467 1491,476 1500,482 1509,482 1517,471 1526,465 1543,457 1553,463 1561,473 1570,478 1578,489 1587,498 1596,502 1606,502 1614,513 1623,523 1631,532 1640,554 1649,562 1657,566 1666,566 1679,570 1693,565 1700,513 1710,467 1718,447 1727,447 1736,452 1745,503 1753,540 1763,550 1770,540 1788,528 1797,515 1806,510 1814,509 1823,517 1832,522 1840,540 1850,552 1858,558 1866,570 1876,588 1884,594 1892,607 1902,618 1912,613 1928,612 1937,607 1954,610 1971,603 1995,602 2015,597 2024,594 2033,582 2042,570 2054,562 2066,554 2077,553 2085,557 2094,545 2102,527", W) +
    poly("1364,166 1375,155 1386,148 1395,149 1405,160 1412,175 1421,192 1430,217 1439,248 1448,274 1456,302 1465,333 1474,370 1482,397 1492,423 1500,440 1509,455 1517,462 1527,465 1543,469 1553,473 1570,472 1587,478 1605,486 1623,507 1640,526 1650,532 1674,550 1685,561 1693,563 1700,540 1710,517 1718,509 1736,508 1751,505 1770,493 1780,492 1788,512 1797,528 1806,530 1815,525 1832,525 1858,533 1867,544 1880,563 1900,587 1920,600 1937,609 1946,613 1954,612 1975,606 1999,603 2024,598 2038,587 2066,575 2085,563 2094,555 2102,543", YEL) +
    poly("1364,178 1379,178 1386,175 1395,174 1405,169 1412,170 1421,175 1432,192 1439,207 1448,223 1466,245 1482,273 1507,322 1533,368 1557,413 1571,440 1579,450 1596,469 1606,478 1640,500 1650,502 1674,515 1693,526 1701,517 1710,511 1718,512 1736,519 1753,525 1764,524 1780,529 1797,522 1824,516 1850,515 1858,513 1867,518 1876,534 1892,554 1912,559 1946,573 1962,580 1980,592 1999,600 2024,604 2034,602 2050,596 2078,587 2094,581 2102,573", MAG) +
    poly("1364,159 1379,160 1395,165 1407,171 1421,181 1439,197 1450,212 1466,230 1484,250 1494,255 1509,271 1527,293 1553,320 1577,348 1604,387 1637,442 1646,457 1666,482 1683,499 1693,504 1710,497 1721,498 1736,504 1757,508 1780,515 1804,517 1832,523 1858,529 1873,535 1880,537 1920,544 1953,549 1963,558 1979,571 2014,577 2050,582 2062,586 2074,587 2094,586 2102,582", RED) +
    poly("1360,134 1369,138 1382,144 1405,153 1430,161 1444,167 1464,178 1480,192 1507,215 1527,227 1543,238 1557,244 1580,255 1596,263 1606,271 1624,289 1652,313 1675,333 1691,347 1703,349 1715,357 1735,372 1764,386 1794,409 1822,424 1840,438 1855,451 1880,473 1900,492 1920,508 1947,525 1979,535 2018,543 2046,548 2066,552 2084,554 2103,553", CYAN, 3));
  add("kline", [1360, 1491, 1500, 1535, 1622, 1631, 1700, 1709, 1718, 1735, 1744, 1797, 1814, 1884, 1980, 1997].map(x => dia(x, 99.5, "#ffff20")).join("") + dia(1517, 657, RED) +
    hl(106, 1360, 1380, GREY) + txt(1381, 112, "19.06", GREY, 13) + hl(653, 1727, 1747, GREY) + txt(1748, 658, "12.54", GREY, 13) +
    vl(2102, 97, 426, W) + vl(2102, 426, 458, "#008c90") + vl(2102, 510, 663, W));
  const arrowUp = (x, y) => `<path d="M${x} ${y - 4}L${x + 4} ${y}H${x + 2}V${y + 4}H${x - 2}V${y}H${x - 4}Z" fill="#ffff20"/>`;
  const arrowDn = (x, y, c) => `<path d="M${x} ${y + 4}L${x + 4} ${y}H${x + 1}V${y - 4}H${x - 1}V${y}H${x - 4}Z" fill="${c}"/>`;
  const sign = (x, y, t, c, s) => `<text x="${x}" y="${y}" text-anchor="middle" font-family="Liberation Serif" font-size="14" fill="${c}" stroke="${s}" stroke-width="3" paint-order="stroke">${t}</text>`;
  add("kline", sign(1561, 448, "S", YEL, "#008040") + arrowDn(1561, 461, GREEN) + sign(1735, 487, "S", YEL, "#008040") + arrowDn(1735, 499, GREEN) +
    arrowUp(1543, 478) + sign(1543, 499, "B", YEL, "#d01010") + arrowUp(1700, 543) + sign(1700, 564, "B", YEL, "#d01010") + arrowUp(2015, 616) + sign(2015, 638, "B", YEL, "#d01010") + arrowDn(2041, 659, RED));
  axis("kline", 98, 662, 4.21, 110.3, kys.map((y, i) => { const p = 19 - i * .5; return [p.toFixed(2), Math.min(y, 656), p > 14.26 ? RED : GREEN, y]; }), 1);

  // 日线成交量
  const kvol = "c25 r21 c17 r12 c10 c12 c19 c15 c19 c14 c11 c10 c12 c18 r13 r14 r7 c17 c24 r20 r13 r19 c13 c16 r8 r8 c10 r14 c10 c11 r8 c10 c10 r7 c6 r7 c5 r7 r24 r79 r112 c74 c57 r58 r40 r33 r35 r25 c22 r28 r54 c33 c23 c22 r25 c17 r15 r15 c29 r9 r14 c11 r9 r9 c14 c14 r17 c11 c13 r18 r13 c13 c14 c17 r13 r13 r13 r32 c36 c30 c26 r29 c17 c25 r44 r63".split(" ");
  rightGrid("kvol", 684, 796, [710, 753]);
  add("kvol", kvol.map((s, i) => { const h = +s.slice(1), x = kx(i); return s[0] == "c" ? box(x - 3, 795 - h, 7, h, CYAN) : `<rect x="${x - 2.5}" y="${795.5 - h}" width="6" height="${h - 1}" stroke="${RED}"/>`; }).join("") +
    poly("1360,772 1373,773 1404,781 1440,779 1453,781 1468,782 1521,780 1543,776 1570,782 1596,784 1640,786 1671,788 1688,789 1693,786 1701,767 1710,748 1718,735 1727,726 1735,720 1745,727 1755,745 1780,764 1788,767 1797,762 1832,764 1840,771 1858,776 1866,776 1889,779 1909,785 1912,784 1980,782 2024,780 2040,771 2058,767 2066,764 2085,769 2094,766 2102,760", YEL) +
    poly("1360,772 1390,772 1413,776 1460,781 1500,781 1553,779 1590,780 1620,784 1693,787 1700,780 1710,768 1723,760 1736,752 1770,741 1780,741 1797,752 1815,760 1850,769 1867,769 1893,777 1912,781 1980,782 2024,780 2051,776 2085,771 2102,764", MAG) +
    poly("1360,768 1393,771 1420,771 1470,777 1517,780 1600,781 1693,784 1710,777 1727,770 1758,765 1787,764 1800,759 1830,758 1858,755 1867,755 1885,765 1910,771 1925,773 1965,777 2000,781 2060,779 2090,775 2102,773", RED) + vl(2102, 684, 795, W));
  axis("kvol", 685, 795, 8.6, 710, [["10000", 710], ["5000", 753]]);
  add("kvol-ax", `<rect x="32.500" y="781.500" width="21" height="14" fill="none" stroke="${DARK}"/>` + txt(52, 793, "x10", DARK, 12, "end"));

  // 抄底资金（日线）
  const kf = [975,949,965,961,943,961,975,956,964,972,947,939,932,973,958,938,946,946,913,950,952,947,947,978,957,951,951,955,954,961,947,943,945,947,953,937,951,947,936,818,947,1000,972,929,974,967,942,973,951,953,913,959,951,927,953,965,949,953,944,949,949,955,954,949,964,961,961,949,954,930,936,955,949,967,960,960,952,899,920,993,977,960,960,941,936,898];
  rightGrid("kfund", 817, 1002, [823, 864, 906, 947, 988]);
  add("kfund", poly(kf.map((y, i) => kx(i) + "," + y).join(" "), YEL, 4) + hl(947, 1360, 2102, RED) + vl(2102, 817, 1001, W));
  axis("kfund", 818, 1001, 8.3, 947, [["600", 824], ["400", 864], ["200", 906], ["0", 947], ["-200", 988]]);

  // CMFX
  const cm = [21,22,23,26,29,33,34,35,35,36,37,40,42,41,41,42,44,43,41,40,39,38,38,38,40,43,46,46,47,49,51,53,54,57,60,63,66,69,64,54,42,32,24,18,14,11,9,8,8,8,7,5,5,6,7,8,10,13,13,15,17,20,23,27,29,30,30,32,33,32,32,33,33,32,32,32,32,29,27,25,24,23,23,24,22];
  rightGrid("cmfx", 1023, 1162, [1049, 1092, 1134]);
  add("cmfx", cm.map((h, i) => vl(kx(i), 1093, 1093 + h, GREEN)).join("") +
    poly("1360,1067 1370,1067 1390,1063 1404,1057 1413,1056 1440,1054 1460,1049 1490,1049 1505,1047 1517,1049 1543,1052 1557,1052 1570,1051 1588,1045 1613,1042 1630,1039 1660,1031 1683,1023.5 1693,1027 1702,1035 1718,1048 1735,1058 1744,1063 1770,1068 1788,1070 1806,1072 1832,1072 1850,1070 1875,1068 1892,1064 1910,1059 1930,1056 1954,1054 2006,1055 2024,1055 2035,1059 2051,1061 2066,1063 2085,1062 2102,1067", YEL) +
    poly("1360,1089 1400,1090 1460,1091 1520,1091 1570,1090 1650,1091 1693,1091 1703,1087 1718,1080 1735,1076 1770,1076 1790,1078 1824,1079 1850,1082 1880,1084 1915,1087 1954,1088 2018,1088 2066,1087 2102,1086", W) +
    vl(2102, 1023, 1093, W) + vl(2102, 1093, 1112, "#e00080") + vl(2102, 1112, 1161, W));
  axis("cmfx", 1024, 1161, 8.5, 1092, [["200", 1049], ["0", 1092], ["-200", 1134]]);

  // 龙腾活跃
  const dr = [1195,1185,1191,1194,1199,1205,1214,1219,1237,1243,1242,1242,1244,1261,1255,1250,1250,1245,1249,1249,1247,1246,1251,1259,1255,1255,1257,1252,1257,1266,1266,1265,1270,1267,1270,1267,1268,1268,1264,1220,1223,1248,1270,1267,1267,1260,1260,1261,1261,1259,1249,1255,1259,1268,1264,1267,1267,1264,1281,1278,1276,1278,1275,1275,1277,1277,1273,1275,1278,1274,1273,1273,1274,1277,1274,1273,1271,1263,1266,1275,1275,1271,1271,1277,1265,1255];
  rightGrid("dragon", 1183, 1282, [1186, 1221, 1257]);
  add("dragon", poly(dr.map((y, i) => kx(i) + "," + y).join(" "), "#ffff00", 2) + box(1360, 1256, 743, 2, CYAN) + vl(2102, 1183, 1281, W));
  axis("dragon", 1184, 1281, 9, 1221, [["60", 1190, DARK, 1186], ["40", 1221], ["20", 1257]]);
  add("dates", [["2022/2", 1360], ["3", 1404], ["4", 1587], ["5", 1753], ["6", 1919], ["7", 2102]].map(([t, x]) => vl(x, 1283, 1300, DARK) + txt(x + 1, 1296, t, W)).join(""));

  // ---------- 报价栏 ----------
  const num = "font-['Liberation_Serif','Noto_Sans_CJK_SC'] text-right";
  const book = (rows, marks) => `<table class="w-full h-[110px] table-fixed border-t border-[#a80000] border-separate border-spacing-0 leading-[21px]"><colgroup><col class="w-[17px]"><col class="w-[20px]"><col class="w-[131px]"><col class="w-[133px]"><col></colgroup>` +
    rows.map(([n, p, q], i) => `<tr><th class="p-0 font-normal border-r border-[#a80000]">${marks[i] || ""}</th><td class="p-0 pl-[2px]">${n}</td><td class="p-0 text-[#ff5c5c] ${num}">${p}</td><td class="p-0 text-[#ffff40] ${num}">${q}</td><td></td></tr>`).join("") + `</table>`;
  const stat = (line, a, b, ca, c, d, cd) => `<div class="grid grid-cols-[60px_124px_9px_60px_120px] h-[22px] leading-[21px] ${line ? "border-t border-[#a80000]" : ""}"><span class="pl-[3px]">${a}</span><span class="${num}" style="color:${ca}">${b}</span><span></span><span>${c}</span><span class="${num}" style="color:${cd}">${d}</span></div>`;
  const rise = `<i class="inline-block mr-px border-x-4 border-b-[8px] border-x-transparent border-b-[#ff5c5c]"></i>`;
  $("quote").innerHTML = stat(1, "委比", "+58.87%", RED, "", "12063", RED) +
    book([[5, "14.92", 39], [4, "14.91", 50], [3, "14.90", 39], [2, "14.88", 43], [1, "14.87", 201]], { 1: "卖", 3: "盘" }) +
    book([[1, "14.86", 206], [2, "14.85", 14], [3, "14.84", 5], [4, "14.83", 511], [5, "14.82", 84]], { 1: "买", 3: "盘" }) +
    stat(1, "最新", "14.87", RED, "均价", "14.53", RED) +
    stat(0, "涨跌", rise + "0.61", RED, "开盘", "14.26", RED) +
    stat(0, "涨幅", "+4.28%", RED, "最高", "15.19", RED) +
    stat(0, "总手", "73919", CYAN, "最低", "13.95", GREEN) +
    stat(0, "现手", "938" + rise, YEL, "量比", "1.75", GREEN) +
    stat(0, "金额", "1.074亿", YEL, "强弱", rise + "0.61", RED) +
    stat(0, "换手", "17.44%", YEL, "5日", "49.85%", YEL) +
    stat(1, "涨停", "17.11", RED, "跌停", "11.41", GREEN) +
    stat(1, "笔数", "9518", CYAN, "均笔", "7.8", CYAN) +
    stat(1, "内盘", "32189", GREEN, "外盘", "41730", RED);

  // 饼图
  const slices = [[0, 26.5, "#ff5c5c"], [26.5, 56.8, "#a83c3c"], [56.8, 125.4, "#7c3030"], [125.4, 180, "#541f1f"], [180, 258.7, "#005454"], [258.7, 323, "#008080"], [323, 341.6, "#00a8a8"], [341.6, 360, "#00ffff"]];
  const at = a => `${2339 + 62 * Math.sin(a * Math.PI / 180)} ${641.5 - 62 * Math.cos(a * Math.PI / 180)}`;
  $("pie").innerHTML = slices.map(([a, b, c]) => `<path d="M2339 641.5L${at(a)}A62 62 0 0 1 ${at(b)}Z" fill="${c}" stroke="#a00000"/>`).join("");

  const orders = (marks, n, avg, rows) => `<div class="flex h-[110px] border-t border-[#a80000] leading-[22px]">
    <div class="w-[21px] shrink-0 border-r border-[#a80000] pt-[21px] pl-[3px]">${[...marks].map(c => `<div>${c}</div>`).join("")}</div>
    <div class="pl-[1px]"><div class="h-[22px] font-['Liberation_Serif','Noto_Sans_CJK_SC']">共<span class="text-[#00ffff]">${n}</span>单<span class="text-[#ffff40]">${avg}</span>手/单</div>
    ${rows.map(([t, q, p, c]) => `<div class="flex items-center h-[22px] pl-[2px]"><i class="w-[14px] h-[14px] mr-1" style="background:${c}"></i><span class="w-[41px]">${t}</span><span class="w-20 text-[#ffff40] ${num}">${q}</span><span class="w-[85px] text-[#ffff40] ${num}">${p}</span></div>`).join("")}</div></div>`;
  $("orders").innerHTML =
    orders("委买单", 4246, 17.4, [["特大", 11001, "15%", "#ff5c5c"], ["大单", 12120, "16%", "#a83c3c"], ["中单", 28563, "39%", "#7c3030"], ["小单", 22235, "30%", "#541f1f"]]) +
    orders("委卖单", 6120, 12.1, [["特大", 8111, "11%", "#00ffff"], ["大单", 7190, "10%", "#00a8a8"], ["中单", 26633, "36%", "#008080"], ["小单", 31985, "43%", "#005454"]]);

  const fin = (a, b, c) => `<div class="flex justify-between h-[26px] leading-[26px] pl-[1px] pr-[14px]"><span>${a}</span><span class="${num}" style="color:${c}">${b}</span></div>`;
  $("finance").innerHTML = `<div class="flex justify-between h-[26px] leading-[26px] pl-[1px]"><span>所属行业</span><span class="text-[#ffff40]">纺织业</span></div>` +
    `<div class="flex h-[25px] leading-[26px] pl-[1px]">所属概念<span class="ml-[6px] text-[#ffff40]">QFII持股,次新股,口罩,量化低星,融资融券,体育概念</span></div>` +
    `<div class="h-[26px] ml-[1px] leading-[26px] text-center bg-gradient-to-b from-[#343434] to-[#1a1a1a]"><span class="mr-3">主要指标</span></div>` +
    `<div class="flex justify-between h-[26px] leading-[26px] pl-[1px] pr-[26px]"><span>财报披露</span><span class="text-[15px]">2022-08-30</span></div>` +
    fin("市盈率(TTM)", "68.531", RED) + fin("扣非市盈率(TTM)", "58.314", RED) + fin("市净率", "4.2531", RED) +
    fin("有效流通市值", "5.245亿", YEL) + fin("流通A市值", "6.302亿", YEL) + fin("总市值", "28.01亿", YEL);
</script>
</body>
</html>
